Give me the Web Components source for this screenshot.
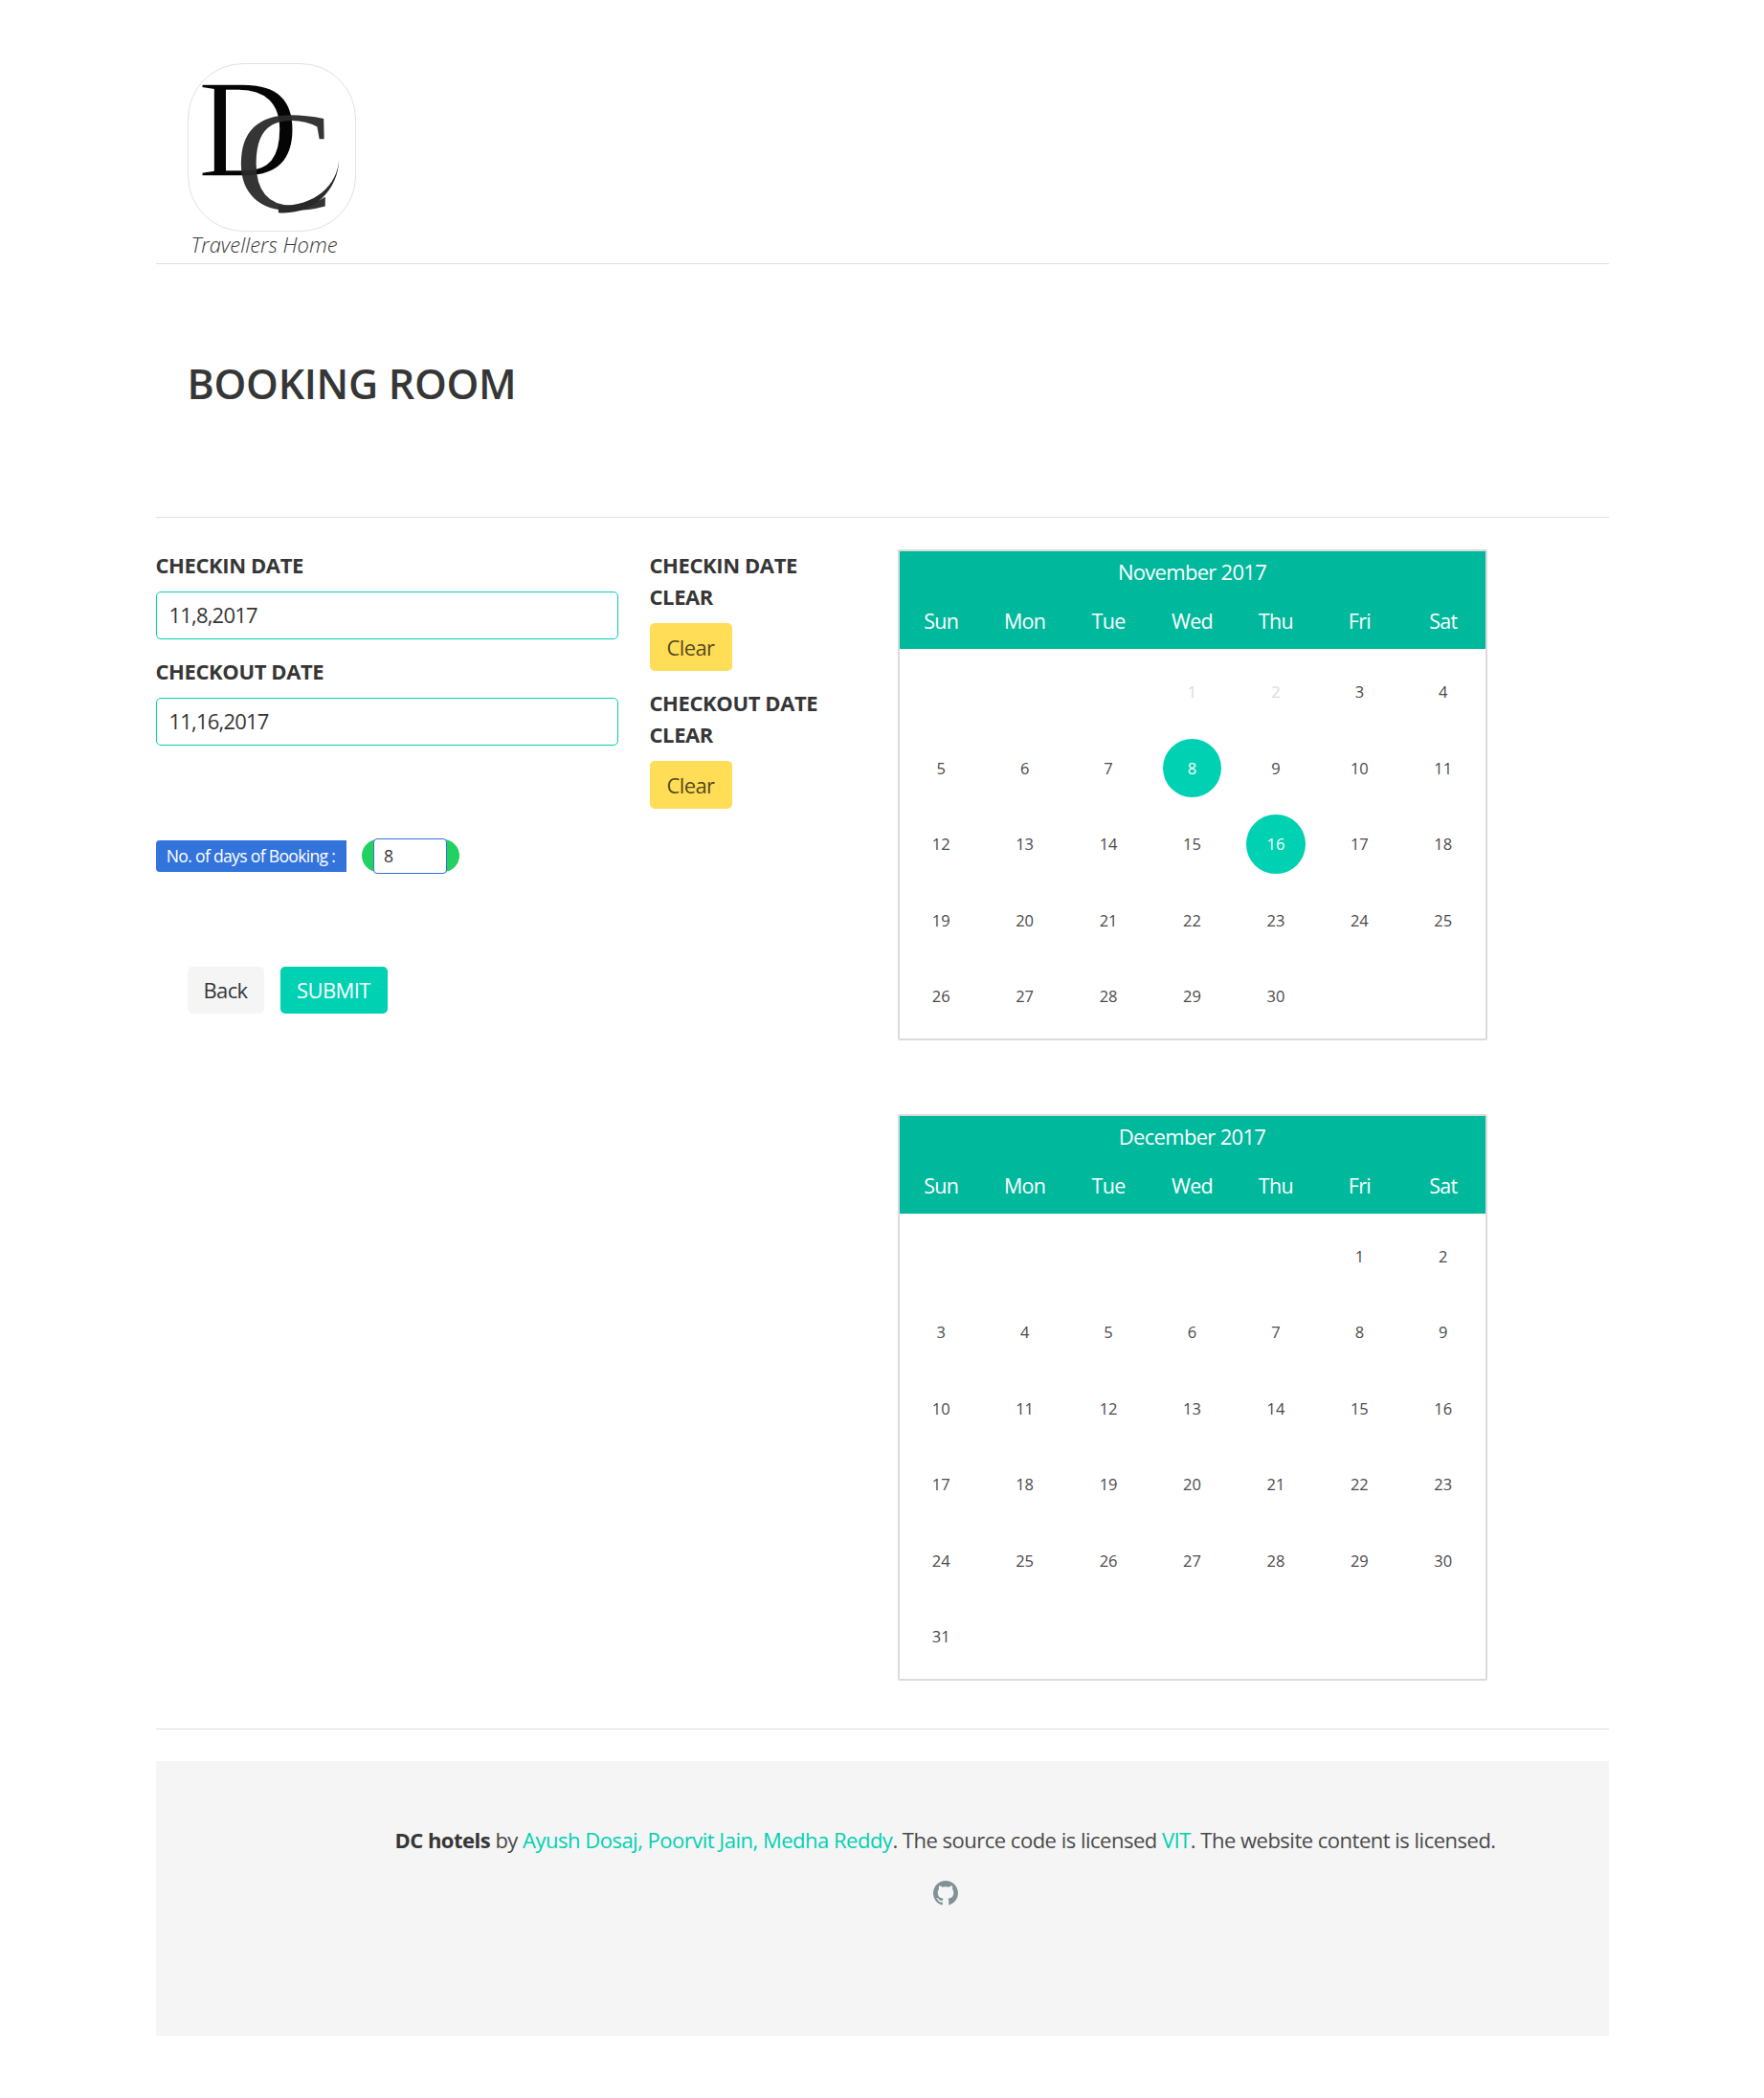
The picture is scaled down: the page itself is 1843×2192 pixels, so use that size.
<!DOCTYPE html>
<html lang="en">
<head>
<meta charset="utf-8">
<title>Booking room</title>
<style>
    html, body { margin: 0; background: #fff; }
    body {
        font-family: "Open Sans", "Noto Sans", sans-serif;
        font-size: 22px;
        line-height: 33px;
        color: #4a4a4a;
    }
    .page { width: 1518px; margin: 0 auto; padding-bottom: 65px; }
    .main {
        display: grid;
        grid-template-columns: 483px 226px 616px;
        column-gap: 33px;
        padding-top: 33px;
    }
    .fields { min-width: 0; }
    .calendars { display: flex; flex-direction: column; gap: 77px; }
</style>
</head>
<body>
<div class="page">
    <site-header></site-header>
    <page-title>BOOKING ROOM</page-title>
    <h-rule></h-rule>
    <div class="main">
        <div class="fields">
            <date-field label="CHECKIN DATE" value="11,8,2017"></date-field>
            <date-field label="CHECKOUT DATE" value="11,16,2017"></date-field>
            <days-badge days="8">No. of days of Booking :</days-badge>
            <form-actions></form-actions>
        </div>
        <div class="clears">
            <clear-field>CHECKIN DATE CLEAR</clear-field>
            <clear-field>CHECKOUT DATE CLEAR</clear-field>
        </div>
        <div class="calendars">
            <month-calendar title="November 2017" start="3" days="30" disabled="1,2" selected="8,16"></month-calendar>
            <month-calendar title="December 2017" start="5" days="31"></month-calendar>
        </div>
    </div>
    <h-rule style="margin-top:50px"></h-rule>
    <site-footer>
        <b>DC hotels</b> by <a>Ayush Dosaj, Poorvit Jain, Medha Reddy</a>. The source code is licensed <a>VIT</a>. The website content is licensed.
    </site-footer>
</div>

<script>
// Linha horizontal entre as seções
class HRule extends HTMLElement {
    constructor() {
        super();
        this.attachShadow({ mode: 'open' });
        this.shadowRoot.innerHTML = `
            <style>
                :host { display: block; height: 1px; background: #e0e0e0; }
            </style>
        `;
    }
}

// Logo e nome do hotel
class SiteHeader extends HTMLElement {
    constructor() {
        super();
        this.attachShadow({ mode: 'open' });
        this.shadowRoot.innerHTML = `
            <style>
                :host { display: block; padding-top: 66px; border-bottom: 1px solid #e0e0e0; }
                .logo {
                    display: block;
                    width: 176px;
                    height: 176px;
                    margin-left: 33px;
                    box-sizing: border-box;
                    border: 1px solid #e2e2e2;
                    border-radius: 58px;
                    overflow: visible;
                }
                .tag {
                    margin-left: 37px;
                    padding-bottom: 7px;
                    font-style: italic;
                    font-weight: 300;
                    font-size: 22px;
                    line-height: 26px;
                    color: #363636;
                }
                text { font-family: "Liberation Serif", serif; }
            </style>
            <svg class="logo" viewBox="0 0 176 176">
                <text x="9.5" y="118" font-size="148" fill="#050505" stroke="#fff" stroke-width="1.6">D</text>
                <text transform="translate(49 154) scale(1.05 1)" font-size="149" fill="#2a2a2a" fill-opacity="0.95">C</text>
                <path d="M116 108H158V126C152 138 136 148 116 150Z" fill="#fff"/>
                <path d="M95 157C130 160 158 135 159 101C157 128 135 150 95 150Z" fill="#2a2a2a"/>
            </svg>
            <div class="tag">Travellers Home</div>
        `;
    }
}

// Título da página
class PageTitle extends HTMLElement {
    constructor() {
        super();
        this.attachShadow({ mode: 'open' });
        this.shadowRoot.innerHTML = `
            <style>
                :host {
                    display: block;
                    padding: 96px 0 111px 33px;
                    font-size: 43px;
                    line-height: 57px;
                    font-weight: 600;
                    color: #363636;
                    letter-spacing: -0.3px;
                }
            </style>
            <slot></slot>
        `;
    }
}

// Rótulo + campo de data
class DateField extends HTMLElement {
    constructor() {
        super();
        this.attachShadow({ mode: 'open' });
        this.shadowRoot.innerHTML = `
            <style>
                :host { display: block; margin-bottom: 17px; }
                label {
                    display: block;
                    font-weight: 700;
                    color: #363636;
                    margin-bottom: 11px;
                    letter-spacing: -0.4px;
                }
                .input {
                    box-sizing: border-box;
                    height: 50px;
                    padding: 0 13px;
                    border: 1.4px solid #00d1b2;
                    border-radius: 5px;
                    line-height: 47px;
                    color: #363636;
                    letter-spacing: -0.8px;
                }
            </style>
            <label></label>
            <div class="input"></div>
        `;
        this.shadowRoot.querySelector('label').textContent = this.getAttribute('label');
        this.shadowRoot.querySelector('.input').textContent = this.getAttribute('value');
    }
}

// Título + botão amarelo
class ClearField extends HTMLElement {
    constructor() {
        super();
        this.attachShadow({ mode: 'open' });
        this.shadowRoot.innerHTML = `
            <style>
                :host { display: block; margin-bottom: 17px; }
                .label {
                    width: 190px;
                    font-weight: 700;
                    color: #363636;
                    margin-bottom: 11px;
                    letter-spacing: -0.4px;
                }
                button {
                    display: block;
                    width: 86px;
                    height: 50px;
                    padding: 0;
                    border: 0;
                    border-radius: 5px;
                    background: #ffdd57;
                    color: rgba(0, 0, 0, 0.7);
                    font: inherit;
                    letter-spacing: -0.6px;
                }
            </style>
            <div class="label"><slot></slot></div>
            <button type="button">Clear</button>
        `;
    }
}

// Etiqueta azul com o número de dias
class DaysBadge extends HTMLElement {
    constructor() {
        super();
        this.attachShadow({ mode: 'open' });
        this.shadowRoot.innerHTML = `
            <style>
                :host { display: flex; align-items: center; margin-top: 97px; gap: 16px; height: 36px; }
                .tag {
                    width: 199px;
                    height: 33px;
                    line-height: 33px;
                    text-align: center;
                    background: #3273dc;
                    color: #fff;
                    font-size: 17.6px;
                    letter-spacing: -0.7px;
                    border-radius: 4px 0 0 4px;
                }
                .pill {
                    display: flex;
                    justify-content: center;
                    align-items: center;
                    width: 102px;
                    height: 34px;
                    border-radius: 17px;
                    background: #23d160;
                }
                .num {
                    box-sizing: border-box;
                    width: 77px;
                    height: 37px;
                    padding-left: 10px;
                    background: #fff;
                    border: 1.4px solid #3273dc;
                    border-radius: 4px;
                    font-size: 17.6px;
                    line-height: 34px;
                    color: #363636;
                }
            </style>
            <div class="tag"><slot></slot></div>
            <div class="pill"><div class="num"></div></div>
        `;
        this.shadowRoot.querySelector('.num').textContent = this.getAttribute('days');
    }
}

// Botões Back e Submit
class FormActions extends HTMLElement {
    constructor() {
        super();
        this.attachShadow({ mode: 'open' });
        this.shadowRoot.innerHTML = `
            <style>
                :host { display: flex; gap: 17px; margin: 98px 0 0 33px; }
                button {
                    height: 49px;
                    padding: 0;
                    border: 0;
                    border-radius: 5px;
                    font: inherit;
                    letter-spacing: -0.6px;
                }
                .back { width: 80px; background: #f5f5f5; color: #363636; }
                .submit { width: 112px; background: #00d1b2; color: #fff; }
            </style>
            <button class="back" type="button">Back</button>
            <button class="submit" type="button">SUBMIT</button>
        `;
    }
}

// Calendário de um mês
class MonthCalendar extends HTMLElement {
    constructor() {
        super();
        this.attachShadow({ mode: 'open' });

        const start = Number(this.getAttribute('start'));
        const total = Number(this.getAttribute('days'));
        const disabled = (this.getAttribute('disabled') || '').split(',');
        const selected = (this.getAttribute('selected') || '').split(',');

        const weekDays = ['Sun', 'Mon', 'Tue', 'Wed', 'Thu', 'Fri', 'Sat']
            .map((d) => `<div>${d}</div>`).join('');

        let cells = '<div></div>'.repeat(start);
        for (let d = 1; d <= total; d++) {
            let cls = '';
            if (disabled.includes(String(d))) cls = 'off';
            if (selected.includes(String(d))) cls = 'sel';
            cells += `<div><span class="${cls}">${d}</span></div>`;
        }

        this.shadowRoot.innerHTML = `
            <style>
                :host {
                    display: block;
                    width: 616px;
                    box-sizing: border-box;
                    border: 2px solid #dbdbdb;
                    border-radius: 2px;
                }
                .head { background: #00b89c; color: #fff; text-align: center; letter-spacing: -0.7px; }
                .title { height: 43px; line-height: 43px; padding-bottom: 1px; font-size: 22px; }
                .week, .dates { display: grid; grid-template-columns: repeat(7, 1fr); text-align: center; }
                .week { height: 58px; line-height: 58px; font-size: 21.5px; }
                .dates {
                    padding: 5px 0 4px;
                    grid-auto-rows: 79.5px;
                    font-size: 16.5px;
                    color: #4a4a4a;
                }
                .dates div { display: flex; align-items: center; justify-content: center; }
                .dates span {
                    width: 61.5px;
                    height: 61.5px;
                    line-height: 61.5px;
                    border-radius: 50%;
                }
                .off { color: #dbdbdb; }
                .sel { background: #00d1b2; color: #fff; }
            </style>
            <div class="head">
                <div class="title"></div>
                <div class="week">${weekDays}</div>
            </div>
            <div class="dates">${cells}</div>
        `;
        this.shadowRoot.querySelector('.title').textContent = this.getAttribute('title');
    }
}

// Rodapé
class SiteFooter extends HTMLElement {
    constructor() {
        super();
        this.attachShadow({ mode: 'open' });
        this.shadowRoot.innerHTML = `
            <style>
                :host {
                    display: block;
                    margin-top: 33px;
                    padding: 66px 0 136px 132px;
                    background: #f5f5f5;
                    text-align: center;
                    letter-spacing: -0.5px;
                }
                ::slotted(b) { color: #363636; }
                ::slotted(a) { color: #00d1b2; }
                svg { display: block; width: 26px; height: 26px; margin: 26px auto 0; fill: #7f9296; }
            </style>
            <div><slot></slot></div>
            <svg viewBox="0 0 16 16"><path d="M8 0C3.58 0 0 3.58 0 8c0 3.54 2.29 6.53 5.47 7.59.4.07.55-.17.55-.38 0-.19-.01-.82-.01-1.49-2.01.37-2.53-.49-2.69-.94-.09-.23-.48-.94-.82-1.13-.28-.15-.68-.52-.01-.53.63-.01 1.08.58 1.23.82.72 1.21 1.87.87 2.33.66.07-.52.28-.87.51-1.07-1.78-.2-3.64-.89-3.64-3.95 0-.87.31-1.59.82-2.15-.08-.2-.36-1.02.08-2.12 0 0 .67-.21 2.2.82.64-.18 1.32-.27 2-.27.68 0 1.36.09 2 .27 1.53-1.04 2.2-.82 2.2-.82.44 1.1.16 1.92.08 2.12.51.56.82 1.27.82 2.15 0 3.07-1.87 3.75-3.65 3.95.29.25.54.73.54 1.48 0 1.07-.01 1.93-.01 2.2 0 .21.15.46.55.38A8.013 8.013 0 0016 8c0-4.42-3.58-8-8-8z"/></svg>
        `;
    }
}

customElements.define('h-rule', HRule);
customElements.define('site-header', SiteHeader);
customElements.define('page-title', PageTitle);
customElements.define('date-field', DateField);
customElements.define('clear-field', ClearField);
customElements.define('days-badge', DaysBadge);
customElements.define('form-actions', FormActions);
customElements.define('month-calendar', MonthCalendar);
customElements.define('site-footer', SiteFooter);
</script>
</body>
</html>
